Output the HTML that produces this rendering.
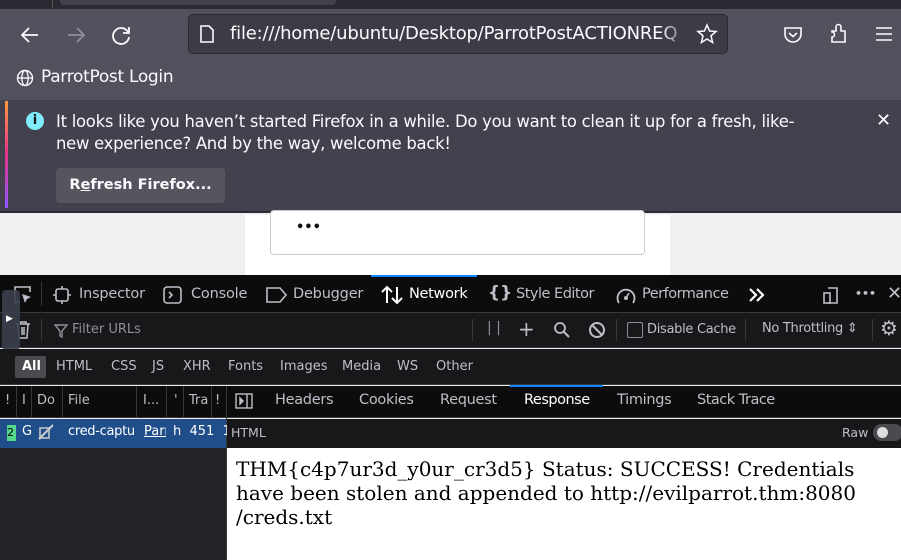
<!DOCTYPE html>
<html><head><meta charset="utf-8"><style>
*{margin:0;padding:0;box-sizing:border-box}
body{width:901px;height:560px;overflow:hidden;position:relative;font-family:"DejaVu Sans","Liberation Sans",sans-serif;background:#f0f0f4}
.a{position:absolute;white-space:nowrap}
svg{position:absolute}
</style></head><body>
<div class="a" style="left:0;top:0;width:901px;height:9px;background:#2b2a33"></div>
<div class="a" style="left:60px;top:0;width:276px;height:5px;background:#42414d;border-radius:0 0 4px 4px"></div>
<div class="a" style="left:52px;top:0;width:1px;height:8px;background:#555"></div>
<div class="a" style="left:0;top:9px;width:901px;height:91px;background:#52525e"></div>
<svg style="left:18px;top:24px" width="24" height="22" viewBox="0 0 24 22"><path d="M20 11H4M11 4L4 11L11 18" stroke="#fbfbfe" stroke-width="1.8" fill="none"/></svg>
<svg style="left:64px;top:24px" width="24" height="22" viewBox="0 0 24 22"><path d="M4 11H20M13 4L20 11L13 18" stroke="#8f8f9d" stroke-width="1.8" fill="none"/></svg>
<svg style="left:110px;top:24px" width="24" height="22" viewBox="0 0 24 22"><path d="M18 8A8 8 0 1 0 19 13" stroke="#fbfbfe" stroke-width="1.8" fill="none"/><path d="M19 3V9H13" stroke="#fbfbfe" stroke-width="1.8" fill="none"/></svg>
<div class="a" style="left:188px;top:14px;width:540px;height:40px;background:#3b3c46;border:1px solid #2a2a33;border-radius:5px"></div>
<svg style="left:198px;top:24px" width="18" height="20" viewBox="0 0 18 20"><path d="M3 2H11L15 6V18H3Z" stroke="#fbfbfe" stroke-width="1.6" fill="none"/></svg>
<div class="a" style="left:230px;top:23px;width:460px;overflow:hidden;color:#fbfbfe;font-size:18px;letter-spacing:-0.2px">file:///home/ubuntu/Desktop/ParrotPostACTIONREQ</div>
<div class="a" style="left:660px;top:16px;width:30px;height:36px;background:linear-gradient(to right,rgba(59,60,70,0),#3b3c46)"></div>
<svg style="left:696px;top:23px" width="22" height="22" viewBox="0 0 22 22"><path d="M11 2L13.6 8L20 8.5L15 12.8L16.6 19.5L11 16L5.4 19.5L7 12.8L2 8.5L8.4 8Z" stroke="#fbfbfe" stroke-width="1.5" fill="none"/></svg>
<svg style="left:782px;top:24px" width="22" height="22" viewBox="0 0 22 22"><path d="M3 4H19V10A8 8 0 0 1 3 10Z" stroke="#fbfbfe" stroke-width="1.6" fill="none"/><path d="M7 9L11 12.5L15 9" stroke="#fbfbfe" stroke-width="1.6" fill="none"/></svg>
<svg style="left:828px;top:22px" width="24" height="24" viewBox="0 0 24 24"><path d="M4 9H8V5A2.5 2.5 0 0 1 13 5V9H17V20H4V15A2.5 2.5 0 0 0 4 10Z" stroke="#fbfbfe" stroke-width="1.6" fill="none"/></svg>
<svg style="left:874px;top:25px" width="20" height="18" viewBox="0 0 20 18"><path d="M2 3H18M2 9H18M2 15H18" stroke="#fbfbfe" stroke-width="1.6"/></svg>
<svg style="left:16px;top:69px" width="18" height="18" viewBox="0 0 18 18"><circle cx="9" cy="9" r="7.5" stroke="#fbfbfe" stroke-width="1.4" fill="none"/><ellipse cx="9" cy="9" rx="3.2" ry="7.5" stroke="#fbfbfe" stroke-width="1.3" fill="none"/><path d="M1.5 9H16.5" stroke="#fbfbfe" stroke-width="1.3"/></svg>
<div class="a" style="left:41px;top:67px;color:#fbfbfe;font-size:17px;letter-spacing:-0.3px">ParrotPost Login</div>
<div class="a" style="left:0;top:100px;width:901px;height:113px;background:#42414d;border-bottom:2px solid #2b2a33"></div>
<div class="a" style="left:5px;top:101px;width:3px;height:107px;background:linear-gradient(#ff9a3e,#e2348a,#9059ff)"></div>
<div class="a" style="left:26px;top:112px;width:18px;height:18px;border-radius:50%;background:#80ebff;color:#15141a;font-size:13px;font-weight:bold;text-align:center;line-height:18px">i</div>
<div class="a" style="left:56px;top:111px;color:#fbfbfe;font-size:16.4px;line-height:22px;letter-spacing:-0.25px">It looks like you haven’t started Firefox in a while. Do you want to clean it up for a fresh, like-<br>new experience? And by the way, welcome back!</div>
<div class="a" style="left:876px;top:110px;color:#fbfbfe;font-size:18px">✕</div>
<div class="a" style="left:56px;top:168px;width:169px;height:35px;background:#56555f;border-radius:4px;color:#fbfbfe;font-size:14.5px;font-weight:bold;line-height:35px;text-align:center">R<u>e</u>fresh Firefox...</div>
<div class="a" style="left:0;top:215px;width:901px;height:60px;background:#f0f0f2"></div>
<div class="a" style="left:245px;top:215px;width:425px;height:60px;background:#fff"></div>
<div class="a" style="left:270px;top:210px;width:375px;height:45px;background:#fff;border:1px solid #ccc;border-radius:4px"></div>
<div class="a" style="left:296px;top:220px;color:#111;font-size:13px;font-weight:bold">•••</div>
<div class="a" style="left:0;top:275px;width:901px;height:38px;background:#0c0c0d;border-bottom:1px solid #38383d"></div>
<div class="a" style="left:371px;top:275px;width:106px;height:2px;background:#0a84ff"></div>
<div class="a" style="left:41px;top:282px;width:1px;height:24px;background:#38383d"></div>
<svg style="left:12px;top:284px" width="22" height="22" viewBox="0 0 22 22"><path d="M8 18H3V3H18V8" stroke="#bfbfc9" stroke-width="1.6" fill="none"/><path d="M10 10L19 13L15 15L13 19Z" fill="#bfbfc9"/></svg>
<svg style="left:53px;top:286px" width="18" height="18" viewBox="0 0 18 18"><rect x="3" y="3" width="12" height="12" rx="2" stroke="#bfbfc9" stroke-width="1.6" fill="none"/><path d="M9 0V3M9 15V18M0 9H3M15 9H18" stroke="#bfbfc9" stroke-width="1.6"/></svg>
<div class="a" style="left:79px;top:286px;color:#bfbfc9;font-size:14.5px;letter-spacing:-0.2px">Inspector</div>
<svg style="left:163px;top:286px" width="20" height="18" viewBox="0 0 20 18"><rect x="1" y="1" width="17" height="16" rx="3" stroke="#bfbfc9" stroke-width="1.6" fill="none"/><path d="M6 6L9 9L6 12" stroke="#bfbfc9" stroke-width="1.6" fill="none"/></svg>
<div class="a" style="left:191px;top:286px;color:#bfbfc9;font-size:14.5px;letter-spacing:-0.2px">Console</div>
<svg style="left:266px;top:287px" width="22" height="16" viewBox="0 0 22 16"><path d="M1 1H14L20 8L14 15H1Z" stroke="#bfbfc9" stroke-width="1.6" fill="none"/></svg>
<div class="a" style="left:293px;top:286px;color:#bfbfc9;font-size:14.5px;letter-spacing:-0.2px">Debugger</div>
<svg style="left:381px;top:285px" width="22" height="20" viewBox="0 0 22 20"><path d="M6 18V2M1 7L6 2L11 7M16 2V18M11 13L16 18L21 13" stroke="#fff" stroke-width="2" fill="none"/></svg>
<div class="a" style="left:409px;top:286px;color:#fff;font-size:14.5px;letter-spacing:-0.3px">Network</div>
<div class="a" style="left:488px;top:283px;color:#bfbfc9;font-size:17px;font-weight:bold">{}</div>
<div class="a" style="left:516px;top:286px;color:#bfbfc9;font-size:14.5px;letter-spacing:-0.5px">Style Editor</div>
<svg style="left:615px;top:285px" width="22" height="20" viewBox="0 0 22 20"><path d="M4 18A8.5 8.5 0 1 1 18 18" stroke="#bfbfc9" stroke-width="1.8" fill="none"/><circle cx="11" cy="13" r="2" fill="#bfbfc9"/><path d="M11 13L14 8" stroke="#bfbfc9" stroke-width="1.6"/></svg>
<div class="a" style="left:642px;top:286px;color:#bfbfc9;font-size:14.5px;letter-spacing:-0.5px">Performance</div>
<svg style="left:747px;top:286px" width="20" height="18" viewBox="0 0 20 18"><path d="M3 3L9 9L3 15M10 3L16 9L10 15" stroke="#fff" stroke-width="2.2" fill="none"/></svg>
<svg style="left:821px;top:284px" width="22" height="22" viewBox="0 0 22 22"><path d="M7 4H16V19H7" stroke="#bfbfc9" stroke-width="1.6" fill="none"/><rect x="3" y="9" width="6" height="10" stroke="#bfbfc9" stroke-width="1.6" fill="none"/></svg>
<div class="a" style="left:855px;top:287px;color:#bfbfc9;font-size:11px;font-weight:bold">•••</div>
<div class="a" style="left:887px;top:283px;color:#bfbfc9;font-size:18px">✕</div>
<div class="a" style="left:0;top:313px;width:901px;height:35px;background:#18181a;border-bottom:1px solid #38383d"></div>
<svg style="left:14px;top:320px" width="18" height="20" viewBox="0 0 18 20"><path d="M2 4H16M6 4V2H12V4M4 4L5 18H13L14 4M8 7V15M10 7V15" stroke="#bfbfc9" stroke-width="1.5" fill="none"/></svg>
<div class="a" style="left:41px;top:319px;width:1px;height:22px;background:#38383d"></div>
<svg style="left:54px;top:324px" width="14" height="14" viewBox="0 0 14 14"><path d="M1 1H13L8 7V13L6 12V7Z" stroke="#8f8f9d" stroke-width="1.4" fill="none"/></svg>
<div class="a" style="left:72px;top:322px;color:#8f8f9d;font-size:13px">Filter URLs</div>
<div class="a" style="left:472px;top:319px;width:1px;height:22px;background:#38383d"></div>
<div class="a" style="left:487px;top:320px;color:#8f8f9d;font-size:14px">| |</div>
<div class="a" style="left:518px;top:317px;color:#bfbfc9;font-size:20px">+</div>
<svg style="left:553px;top:321px" width="18" height="18" viewBox="0 0 18 18"><circle cx="7" cy="7" r="5" stroke="#bfbfc9" stroke-width="1.8" fill="none"/><path d="M11 11L16 16" stroke="#bfbfc9" stroke-width="2"/></svg>
<svg style="left:588px;top:321px" width="18" height="18" viewBox="0 0 18 18"><circle cx="9" cy="9" r="7" stroke="#bfbfc9" stroke-width="2" fill="none"/><path d="M4 4L14 14" stroke="#bfbfc9" stroke-width="2"/></svg>
<div class="a" style="left:616px;top:319px;width:1px;height:22px;background:#38383d"></div>
<div class="a" style="left:627px;top:322px;width:16px;height:16px;border:1.5px solid #8f8f9d;border-radius:2px"></div>
<div class="a" style="left:647px;top:322px;color:#bfbfc9;font-size:13px;letter-spacing:-0.3px">Disable Cache</div>
<div class="a" style="left:745px;top:319px;width:1px;height:22px;background:#38383d"></div>
<div class="a" style="left:762px;top:321px;color:#bfbfc9;font-size:13px;letter-spacing:-0.3px">No Throttling ⇕</div>
<div class="a" style="left:872px;top:319px;width:1px;height:22px;background:#38383d"></div>
<div class="a" style="left:880px;top:316px;color:#bfbfc9;font-size:20px">⚙</div>
<div class="a" style="left:2px;top:290px;width:18px;height:60px;background:#3a3f4d;border-radius:4px;opacity:.9"></div>
<div class="a" style="left:6px;top:314px;color:#fff;font-size:9px">▶</div>
<div class="a" style="left:0;top:349px;width:901px;height:36px;background:#18181a;border-bottom:1px solid #38383d"></div>
<div class="a" style="left:15px;top:356px;width:31px;height:22px;background:#4a4a4f;border-radius:2px"></div>
<div class="a" style="left:22px;top:359px;color:#fff;font-size:13px;font-weight:bold">All</div>
<div class="a" style="left:56px;top:359px;color:#bfbfc9;font-size:13px">HTML</div>
<div class="a" style="left:111px;top:359px;color:#bfbfc9;font-size:13px">CSS</div>
<div class="a" style="left:152px;top:359px;color:#bfbfc9;font-size:13px">JS</div>
<div class="a" style="left:183px;top:359px;color:#bfbfc9;font-size:13px">XHR</div>
<div class="a" style="left:228px;top:359px;color:#bfbfc9;font-size:13px">Fonts</div>
<div class="a" style="left:280px;top:359px;color:#bfbfc9;font-size:13px">Images</div>
<div class="a" style="left:342px;top:359px;color:#bfbfc9;font-size:13px">Media</div>
<div class="a" style="left:397px;top:359px;color:#bfbfc9;font-size:13px">WS</div>
<div class="a" style="left:436px;top:359px;color:#bfbfc9;font-size:13px">Other</div>
<div class="a" style="left:0;top:386px;width:901px;height:32px;background:#0c0c0d;border-bottom:1px solid #38383d"></div>
<div class="a" style="left:5px;top:393px;color:#bfbfc9;font-size:13px">!</div>
<div class="a" style="left:22px;top:393px;color:#bfbfc9;font-size:13px">I</div>
<div class="a" style="left:37px;top:393px;color:#bfbfc9;font-size:13px">Do</div>
<div class="a" style="left:68px;top:393px;color:#bfbfc9;font-size:13px">File</div>
<div class="a" style="left:143px;top:393px;color:#bfbfc9;font-size:13px">I...</div>
<div class="a" style="left:174px;top:393px;color:#bfbfc9;font-size:13px">'</div>
<div class="a" style="left:189px;top:393px;color:#bfbfc9;font-size:13px">Tra</div>
<div class="a" style="left:215px;top:393px;color:#bfbfc9;font-size:13px">!</div>
<div class="a" style="left:16px;top:386px;width:1px;height:32px;background:#38383d"></div>
<div class="a" style="left:31px;top:386px;width:1px;height:32px;background:#38383d"></div>
<div class="a" style="left:62px;top:386px;width:1px;height:32px;background:#38383d"></div>
<div class="a" style="left:136px;top:386px;width:1px;height:32px;background:#38383d"></div>
<div class="a" style="left:166px;top:386px;width:1px;height:32px;background:#38383d"></div>
<div class="a" style="left:183px;top:386px;width:1px;height:32px;background:#38383d"></div>
<div class="a" style="left:211px;top:386px;width:1px;height:32px;background:#38383d"></div>
<div class="a" style="left:226px;top:386px;width:1px;height:174px;background:#38383d"></div>
<div class="a" style="left:510px;top:385px;width:93px;height:2px;background:#0a84ff"></div>
<svg style="left:235px;top:393px" width="18" height="16" viewBox="0 0 18 16"><rect x="1" y="1" width="16" height="14" stroke="#bfbfc9" stroke-width="1.4" fill="none"/><path d="M12 1V15M5 5L8 8L5 11Z" stroke="#bfbfc9" stroke-width="1.4" fill="#bfbfc9"/></svg>
<div class="a" style="left:275px;top:392px;color:#bfbfc9;font-size:14.5px;letter-spacing:-0.3px">Headers</div>
<div class="a" style="left:359px;top:392px;color:#bfbfc9;font-size:14.5px;letter-spacing:-0.3px">Cookies</div>
<div class="a" style="left:440px;top:392px;color:#bfbfc9;font-size:14.5px;letter-spacing:-0.3px">Request</div>
<div class="a" style="left:524px;top:392px;color:#fff;font-size:14.5px;letter-spacing:-0.5px">Response</div>
<div class="a" style="left:617px;top:392px;color:#bfbfc9;font-size:14.5px;letter-spacing:-0.3px">Timings</div>
<div class="a" style="left:697px;top:392px;color:#bfbfc9;font-size:14.5px;letter-spacing:-0.5px">Stack Trace</div>
<div class="a" style="left:0;top:419px;width:226px;height:29px;background:#204e8a"></div>
<div class="a" style="left:7px;top:425px;width:9px;height:16px;background:#51d88a;color:#000;font-size:11px;line-height:16px;overflow:hidden">2</div>
<div class="a" style="left:22px;top:424px;color:#fff;font-size:13px">G</div>
<svg style="left:37px;top:423px" width="18" height="18" viewBox="0 0 18 18"><path d="M3 5H12V15H3Z" stroke="#ccc" stroke-width="1.5" fill="none"/><path d="M2 16L16 2" stroke="#ccc" stroke-width="2"/></svg>
<div class="a" style="left:68px;top:424px;color:#fff;font-size:13px;width:66px;overflow:hidden;letter-spacing:-0.3px">cred-captu</div>
<div class="a" style="left:144px;top:424px;color:#fff;font-size:13px;text-decoration:underline;width:22px;overflow:hidden">Parr</div>
<div class="a" style="left:173px;top:424px;color:#fff;font-size:13px">h&nbsp;&nbsp;451&nbsp;&nbsp;1</div>
<div class="a" style="left:0;top:448px;width:226px;height:112px;background:#232327"></div>
<div class="a" style="left:227px;top:419px;width:674px;height:29px;background:#18181a"></div>
<div class="a" style="left:231px;top:425px;color:#bfbfc9;font-size:12.5px">HTML</div>
<div class="a" style="left:842px;top:425px;color:#bfbfc9;font-size:12.5px">Raw</div>
<div class="a" style="left:873px;top:424px;width:30px;height:17px;border-radius:9px;background:#4a4a4f"></div>
<div class="a" style="left:877px;top:427px;width:11px;height:11px;border-radius:50%;background:#ddd"></div>
<div class="a" style="left:227px;top:448px;width:674px;height:112px;background:#fff"></div>
<div class="a" style="left:236px;top:457px;color:#000;font-size:20px;line-height:24px;font-family:'DejaVu Serif','Liberation Serif',serif;white-space:normal;width:640px">THM{c4p7ur3d_y0ur_cr3d5} Status: SUCCESS! Credentials<br>have been stolen and appended to http://evilparrot.thm:8080<br>/creds.txt</div>
</body></html>
